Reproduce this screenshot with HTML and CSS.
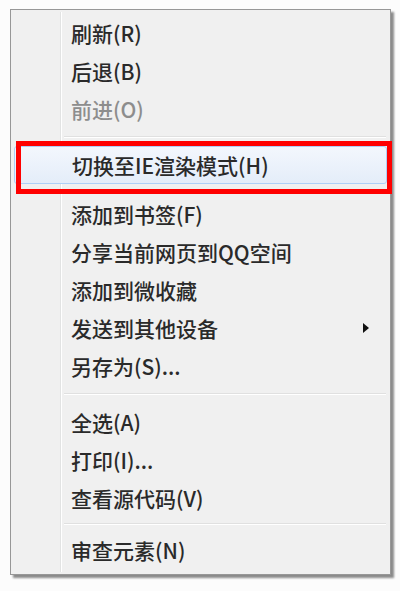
FILE: index.html
```html
<!DOCTYPE html>
<html lang="zh-CN">
<head>
<meta charset="utf-8">
<link rel="stylesheet" href="styles.css">
</head>
<body>
<div class="stage">
  <div class="menu">
    <div class="item">刷新(R)</div>
    <div class="item">后退(B)</div>
    <div class="item disabled">前进(O)</div>
    <div class="sep"></div>
    <div class="item hover">切换至IE渲染模式(H)</div>
    <div class="sep short"></div>
    <div class="item">添加到书签(F)</div>
    <div class="item">分享当前网页到QQ空间</div>
    <div class="item">添加到微收藏</div>
    <div class="item sub">发送到其他设备<span class="arrow"></span></div>
    <div class="item">另存为(S)...</div>
    <div class="sep"></div>
    <div class="item">全选(A)</div>
    <div class="item">打印(I)...</div>
    <div class="item">查看源代码(V)</div>
    <div class="sep last"></div>
    <div class="item">审查元素(N)</div>
  </div>
  <div class="mark"></div>
</div>
</body>
</html>
```
FILE: styles.css
```css
html, body {
  margin: 0;
  padding: 0;
  background: #fcfcfc;
}
.stage {
  position: relative;
  width: 400px;
  height: 591px;
  padding: 9px 0 0 10px;
  box-sizing: border-box;
}
.menu {
  position: relative;
  width: 381px;
  height: 566px;
  box-sizing: border-box;
  border: 1px solid #979797;
  background: #f0f0f0;
  padding: 4px 2px 4px 2px;
  box-shadow: 3px 3px 2px rgba(0, 0, 0, 0.45);
  font-family: "Noto Sans CJK SC", "Microsoft YaHei", sans-serif;
  font-size: 21px;
  font-weight: 500;
  color: #2a2a2a;
}
.menu::before {
  content: "";
  position: absolute;
  left: 49px;
  top: 2px;
  bottom: 2px;
  width: 1px;
  background: #e2e3e3;
  border-right: 1px solid #ffffff;
}
.item {
  position: relative;
  height: 38px;
  line-height: 38px;
  padding-left: 58px;
  white-space: nowrap;
}
.item.disabled {
  color: #8d8d8d;
}
.item.hover {
  margin: 0 1px;
  border: 1px solid #aecff7;
  border-radius: 3px;
  background: linear-gradient(#f3f7fd, #e4edf9);
  line-height: 36px;
  height: 38px;
  box-sizing: border-box;
  padding-left: 57px;
}
.sep {
  height: 18px;
  margin-left: 51px;
  margin-right: 2px;
  display: flex;
  flex-direction: column;
  justify-content: center;
}
.sep::before {
  content: "";
  display: block;
  height: 1px;
  background: #e0e0e0;
  border-bottom: 1px solid #ffffff;
}
.sep.short {
  height: 11px;
}
.sep.last {
  height: 14px;
}
.arrow {
  position: absolute;
  right: 19px;
  top: 14px;
  width: 0;
  height: 0;
  border-top: 5px solid transparent;
  border-bottom: 5px solid transparent;
  border-left: 6px solid #111;
}
.mark {
  position: absolute;
  left: 16px;
  top: 141px;
  width: 376px;
  height: 53px;
  box-sizing: border-box;
  border: 5px solid #ff0000;
}
```
